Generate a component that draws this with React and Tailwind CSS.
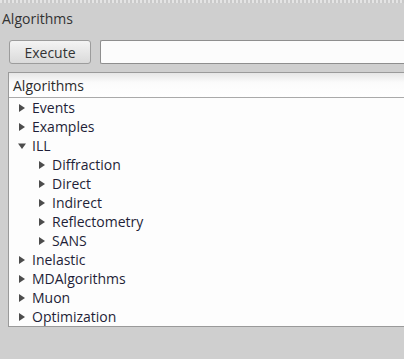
import React from "react";

const tree = [
  { label: "Events", depth: 0 },
  { label: "Examples", depth: 0 },
  { label: "ILL", depth: 0, open: true },
  { label: "Diffraction", depth: 1 },
  { label: "Direct", depth: 1 },
  { label: "Indirect", depth: 1 },
  { label: "Reflectometry", depth: 1 },
  { label: "SANS", depth: 1 },
  { label: "Inelastic", depth: 0 },
  { label: "MDAlgorithms", depth: 0 },
  { label: "Muon", depth: 0 },
  { label: "Optimization", depth: 0 },
];

function Arrow({ open }) {
  return (
    <svg width="8" height="8" viewBox="0 0 8 8" className="shrink-0">
      {open ? (
        <path d="M0 1.5 L8 1.5 L4 7 Z" fill="#4c4c4c" />
      ) : (
        <path d="M1 0 L7 4 L1 8 Z" fill="#4c4c4c" />
      )}
    </svg>
  );
}

export default function App() {
  return (
    <div className="w-[404px] h-[359px] bg-[#cfcfcf] overflow-hidden font-['Open_Sans',sans-serif] text-[14px]">
      {/* dotted top edge */}
      <div className="h-[3px] bg-[repeating-linear-gradient(90deg,#e4e4e4_0_2px,#c9c9c9_2px_4px)]" />

      {/* Title */}
      <div className="h-[31px] flex items-center pl-[2px] text-[#333333]">Algorithms</div>

      {/* Execute row */}
      <div className="flex items-center gap-[9px] pl-[9px] mt-[6px]">
        <button className="w-[82px] h-[24px] rounded-[3px] border border-[#9c9c9c] bg-[linear-gradient(#f4f4f4,#dadada)] text-[#333333] flex items-center justify-center">
          Execute
        </button>
        <div className="flex-1 h-[24px] border border-[#8e8e8e] border-r-0 bg-[#fcfcfc] rounded-l-[2px]" />
      </div>

      {/* Tree */}
      <div className="ml-[8px] mt-[8px] h-[255px] border-l border-t border-b border-[#9a9a9a] bg-[#fdfdfd]">
        <div className="h-[25px] flex items-center pl-[4px] border-b border-[#aaaaaa] bg-[linear-gradient(#e6e6e6,#fbfbfb_40%,#ffffff)] text-[#2b2b2b]">
          Algorithms
        </div>
        <div className="flex flex-col">
          {tree.map((item, idx) => (
            <div
              key={idx}
              className={`h-[19px] flex items-center gap-[6px] text-[#1f1f38] ${
                item.depth === 1 ? "pl-[29px]" : "pl-[9px]"
              }`}
            >
              <Arrow open={item.open} />
              <span>{item.label}</span>
            </div>
          ))}
        </div>
      </div>
    </div>
  );
}
